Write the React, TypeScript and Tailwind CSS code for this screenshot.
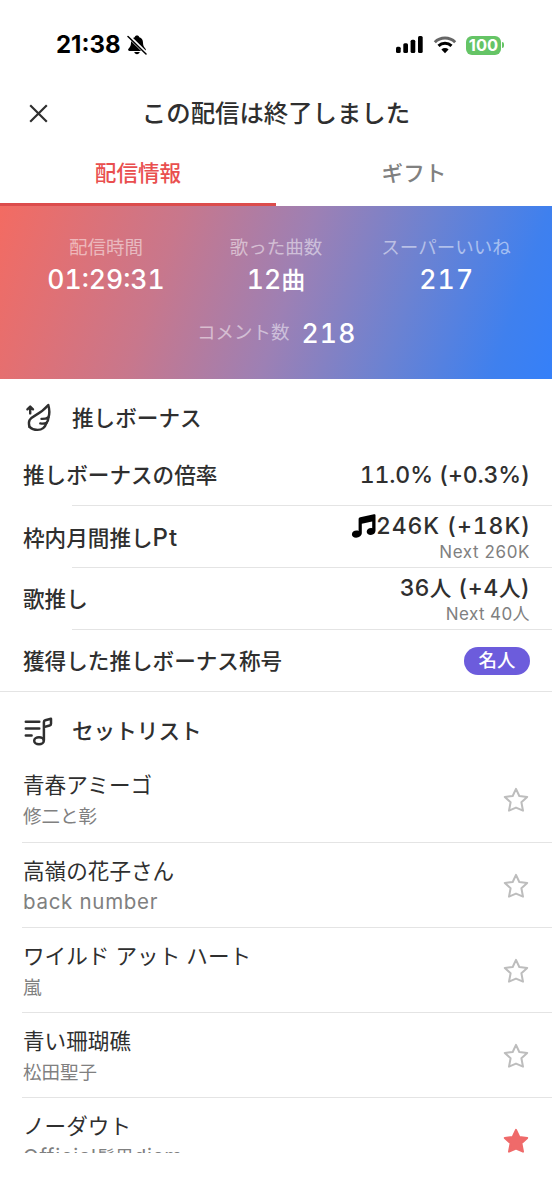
import type { ReactNode } from "react";
import clsx from "clsx";

type Song = {
  title: string;
  artist: string;
  favorite: boolean;
};

const songs: Song[] = [
  { title: "青春アミーゴ", artist: "修二と彰", favorite: false },
  { title: "高嶺の花子さん", artist: "back number", favorite: false },
  { title: "ワイルド アット ハート", artist: "嵐", favorite: false },
  { title: "青い珊瑚礁", artist: "松田聖子", favorite: false },
  { title: "ノーダウト", artist: "Official髭男dism", favorite: true },
];

function BellOffIcon() {
  return (
    <svg className="h-5 w-5" viewBox="0 0 20 20" fill="none">
      <path
        d="M10 .6c-1.300 0-2 .7-2.300 1.600C5.100 3 4.100 5 4 7.700c-.1 2.300-.5 3.500-1.500 4.700-.8 1-1.400 1.500-1.400 2.300 0 .8.600 1.200 1.500 1.200h14.800c.9 0 1.500-.4 1.500-1.200 0-.8-.6-1.300-1.400-2.300-1-1.200-1.400-2.400-1.500-4.700-.1-2.700-1.100-4.700-3.700-5.500C12 1.300 11.300.6 10 .6ZM7.300 17c.3 1.400 1.300 2.200 2.700 2.200s2.400-.8 2.700-2.200Z"
        fill="#000"
      />
      <path d="m1.700 1.200 17.800 17.600" stroke="#fff" strokeWidth="3.600" />
      <path d="m1 1.500 18 17.500" stroke="#000" strokeWidth="1.500" strokeLinecap="round" />
    </svg>
  );
}

function SignalIcon() {
  return (
    <svg className="h-[18px] w-[28px]" viewBox="0 0 28 18">
      <rect x="0" y="10.700" width="4.700" height="6.300" rx="1.500" />
      <rect x="7.300" y="7.300" width="4.700" height="9.700" rx="1.500" />
      <rect x="14.600" y="3.700" width="4.700" height="13.300" rx="1.500" />
      <rect x="22" y="0" width="4.700" height="17" rx="1.500" />
    </svg>
  );
}

function WifiIcon() {
  return (
    <svg className="h-[18px] w-6" viewBox="0 0 24 18" fill="none">
      <path d="M1.800 6.200a14.600 14.600 0 0 1 20.400 0" stroke="#666" strokeWidth="3" />
      <path d="M5.500 9.900a9.400 9.400 0 0 1 13 0" stroke="#000" strokeWidth="3" />
      <path d="M12 17.200 8.400 13.500a5.200 5.200 0 0 1 7.200 0Z" fill="#000" />
    </svg>
  );
}

function WingIcon() {
  return (
    <svg
      className="h-[30px] w-[30px]"
      viewBox="0 0 30 30"
      fill="none"
      stroke="#2f2f2f"
      strokeWidth="2.400"
      strokeLinecap="round"
      strokeLinejoin="round"
    >
      <path d="M7.200 10.400V4M4.400 6.300l2.800-2.700 2.800 2.700" />
      <path d="M6.500 23.800C4.800 17.800 6.700 15.500 12 12.600c5.500-3 9.500-6.100 13.300-10.600 1.300 4.500 1.300 9 .2 12.200" />
      <path d="M18.500 15.900c2.700.1 5-.4 7-1.700-.1 2.500-.8 4.400-2 5.800" />
      <path d="M17.300 20.400c2.200.4 4.200.3 6.200-.4-1.400 4.500-4.700 6.900-9 6.900-3.500 0-6-1-8-3.100" />
    </svg>
  );
}

function SetlistIcon() {
  return (
    <svg
      className="h-[30px] w-[30px]"
      viewBox="0 0 30 30"
      fill="none"
      stroke="#2f2f2f"
      strokeWidth="2.500"
      strokeLinecap="round"
      strokeLinejoin="round"
    >
      <path d="M2.800 5.800h13.500M2.800 12.500h13.500M2.800 19.400h5.800" />
      <ellipse cx="16" cy="24.700" rx="4.800" ry="3.500" />
      <path d="M20.900 24.300V6c0-1 .4-1.500 1.400-1.800l5.700-1.400v4.900c0 1-.4 1.500-1.400 1.800l-5.700 1.600" />
    </svg>
  );
}

function NoteIcon() {
  return (
    <svg className="h-6 w-[25px]" viewBox="0 0 25 24" fill="#000">
      <path d="M7.600 5.200c0-1.100.6-1.700 1.600-2L23 .2c1-.2 1.500.1 1.500 1.100v15.500c0 2.300-2 4.100-4.600 4.100-2.600 0-4.200-1.200-4.200-3.200 0-2.200 2-3.700 4.300-3.700.4 0 .8.100 1.200.2V7.500L10.800 9.800v9.300c0 2.600-2.400 4.600-5.700 4.600-2.500 0-4.200-1.400-4.200-3.300 0-2.200 2-3.800 4.700-3.800.8 0 1.400.1 2 .3Z" />
    </svg>
  );
}

function StarIcon({ filled }: { filled: boolean }) {
  return (
    <svg
      className="h-[26px] w-[26px]"
      viewBox="0 0 26 26"
      fill={filled ? "#ef6a6a" : "none"}
      stroke={filled ? "#ef6a6a" : "#bdbdbd"}
      strokeWidth="2"
      strokeLinejoin="round"
    >
      <path d="m13 1.800 3.300 7.200 7.900.9-5.800 5.300 1.600 8.500-7-3.100-7 3.100 1.600-8.500-5.800-5.300 7.900-.9Z" />
    </svg>
  );
}

// Latin runs are set a little larger and wider than the kana and kanji next to them
function MixedText({ text }: { text: string }) {
  return (
    <>
      {text.split(/([A-Za-z][A-Za-z ]*)/).map((part, i) =>
        i % 2 === 1 ? (
          <span key={i} className="text-[20.500px] tracking-[0.700px]">
            {part}
          </span>
        ) : (
          part
        )
      )}
    </>
  );
}

function Stat({ label, children }: { label: string; children: ReactNode }) {
  return (
    <div className="flex flex-1 flex-col items-center">
      <span className="text-[18.500px] leading-7 text-white/50">{label}</span>
      <span className="text-[26.500px] leading-9 font-medium tabular-nums">{children}</span>
    </div>
  );
}

function BonusRow({ label, last, children }: { label: ReactNode; last?: boolean; children: ReactNode }) {
  return (
    <div>
      <div className="flex h-[61px] items-center justify-between pt-[2px] pr-[22px] pl-[23px]">
        <span className="text-[21.600px] font-medium">{label}</span>
        {children}
      </div>
      <div className={clsx("h-px bg-[#e4e4e4]", !last && "ml-[72px]")} />
    </div>
  );
}

function SongRow({ song }: { song: Song }) {
  return (
    <div className="ml-[22px] flex h-[85.200px] shrink-0 items-center justify-between border-b border-[#e4e4e4] pt-[2px] pr-[23px]">
      <div className="pl-px">
        <p className="text-[21.600px] leading-8">{song.title}</p>
        <p className="h-[30px] text-[18.500px] leading-[30px] whitespace-nowrap text-[#808080]">
          <MixedText text={song.artist} />
        </p>
      </div>
      <StarIcon filled={song.favorite} />
    </div>
  );
}

export default function App() {
  return (
    <div className="flex h-[1200px] w-[552px] flex-col overflow-hidden bg-white font-['Inter','Noto_Sans_CJK_JP',sans-serif] text-[#2f2f2f]">
      <div className="flex h-[89px] shrink-0 items-center justify-between pt-px pr-[48px] pl-[56px] text-black">
        <div className="flex items-center gap-[6px]">
          <span className="text-[24px] font-bold">21:38</span>
          <BellOffIcon />
        </div>
        <div className="flex items-center">
          <SignalIcon />
          <span className="ml-[9px]">
            <WifiIcon />
          </span>
          <span className="ml-[9px] flex h-[19px] w-[35px] items-center justify-center rounded-[6px] bg-[#65c466] text-[16.500px] font-bold text-white">
            100
          </span>
          <span className="ml-px h-[6px] w-[2px] rounded-r-full bg-[#65c466]" />
        </div>
      </div>

      <header className="relative flex h-[48px] shrink-0 items-center justify-center">
        <button type="button" aria-label="閉じる" className="absolute left-[29px]">
          <svg className="h-[19px] w-[19px]" viewBox="0 0 19 19" stroke="#2f2f2f" strokeWidth="2.200">
            <path d="m1.200 1.200 16.600 16.600M17.800 1.200 1.200 17.800" />
          </svg>
        </button>
        <h1 className="text-[24.400px] font-medium">この配信は終了しました</h1>
      </header>

      <nav className="grid h-[69px] shrink-0 grid-cols-2 text-[21.600px] font-medium">
        <button type="button" className="border-b-[3px] border-[#dc4c4c] pt-[7px] text-[#e94f4f]">
          配信情報
        </button>
        <button type="button" className="border-b-[3px] border-transparent pt-[7px] text-[#808080]">
          ギフト
        </button>
      </nav>

      <section className="h-[173px] shrink-0 bg-[linear-gradient(109deg,#f36b62_0%,#c8778c_30%,#9d80b4_52%,#6b82d2_72%,#3f80ee_90%,#3580f9_100%)] pt-[27px] text-white">
        <div className="flex px-[21px]">
          <Stat label="配信時間">01:29:31</Stat>
          <Stat label="歌った曲数">
            12<span className="text-[24px]">曲</span>
          </Stat>
          <Stat label="スーパーいいね">
            <span className="-mr-[1.500px] tracking-[1.200px]">217</span>
          </Stat>
        </div>
        <div className="mt-[16px] flex items-center justify-center gap-3">
          <span className="text-[18.500px] text-white/50">コメント数</span>
          <span className="-mr-[1.500px] text-[26.500px] leading-9 font-medium tracking-[1.200px] tabular-nums">218</span>
        </div>
      </section>

      <section className="shrink-0">
        <div className="flex h-[65px] items-center gap-[19px] pt-[13px] pl-[23px]">
          <WingIcon />
          <h2 className="text-[21.600px] font-medium">推しボーナス</h2>
        </div>
        <BonusRow label="推しボーナスの倍率">
          <span className="text-[23px] font-medium tracking-[-0.100px] tabular-nums">11.0% (+0.3%)</span>
        </BonusRow>
        <BonusRow
          label={
            <>
              枠内月間推し<span className="text-[24px] tracking-[1px]">Pt</span>
            </>
          }
        >
          <div className="flex flex-col items-end">
            <div className="flex items-center">
              <NoteIcon />
              <span className="-mr-px text-[23px] leading-7 font-medium tracking-[0.900px] tabular-nums">246K (+18K)</span>
            </div>
            <span className="text-[17px] leading-6 tracking-[0.600px] text-[#808080]">Next 260K</span>
          </div>
        </BonusRow>
        <BonusRow label="歌推し">
          <div className="flex flex-col items-end">
            <span className="text-[23px] leading-7 font-medium tracking-[0.500px]">
              36<span className="text-[21.600px]">人</span> (+4<span className="text-[21.600px]">人</span>)
            </span>
            <span className="text-[17px] leading-6 tracking-[0.400px] text-[#808080]">Next 40人</span>
          </div>
        </BonusRow>
        <BonusRow label="獲得した推しボーナス称号" last>
          <span className="mb-[2px] flex h-[28px] w-[66px] items-center justify-center rounded-full bg-[#6c5cdc] text-[18.500px] font-medium text-white">
            名人
          </span>
        </BonusRow>
      </section>

      <section className="flex h-[461px] shrink-0 flex-col overflow-hidden">
        <div className="flex h-[65.400px] shrink-0 items-center gap-[19px] pt-3 pl-[23px]">
          <SetlistIcon />
          <h2 className="text-[21.600px] font-medium">セットリスト</h2>
        </div>
        {songs.map((song) => (
          <SongRow key={song.title} song={song} />
        ))}
      </section>
    </div>
  );
}
